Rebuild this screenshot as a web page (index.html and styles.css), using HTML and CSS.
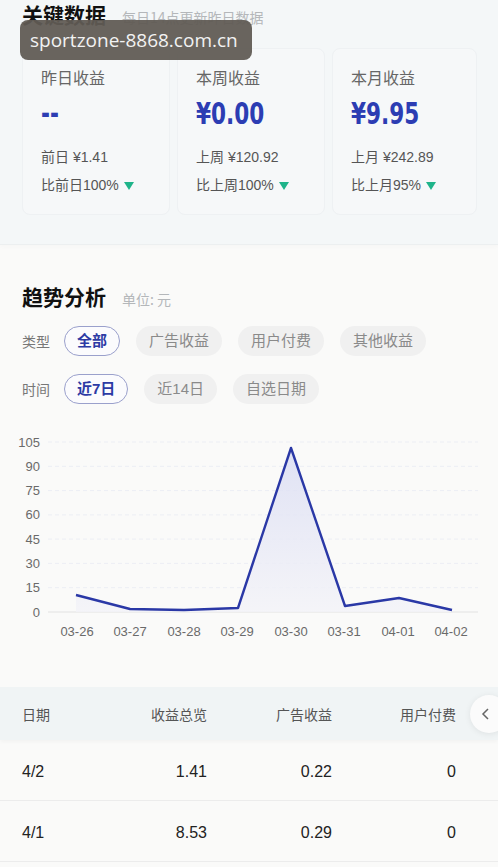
FILE: index.html
```html
<!DOCTYPE html>
<html lang="zh-CN">
<head>
  <meta charset="UTF-8" />
  <meta name="viewport" content="width=device-width, initial-scale=1.0"/>
  <title>数据概览</title>
  <link rel="stylesheet" href="styles.css">
</head>
<body>
  <div class="watermark">sportzone-8868.com.cn</div>

  <section class="key-data">
    <div class="section-head">
      <h3>关键数据</h3>
      <span class="hint">每日14点更新昨日数据</span>
    </div>

    <div class="cards">
      <div class="card">
        <div class="card-label">昨日收益</div>
        <div class="card-value"><span>--</span></div>
        <div class="card-sub">前日 ¥1.41</div>
        <div class="card-sub">比前日100% <span class="down"></span></div>
      </div>
      <div class="card">
        <div class="card-label">本周收益</div>
        <div class="card-value"><span>¥0.00</span></div>
        <div class="card-sub">上周 ¥120.92</div>
        <div class="card-sub">比上周100% <span class="down"></span></div>
      </div>
      <div class="card">
        <div class="card-label">本月收益</div>
        <div class="card-value"><span>¥9.95</span></div>
        <div class="card-sub">上月 ¥242.89</div>
        <div class="card-sub">比上月95% <span class="down"></span></div>
      </div>
    </div>
  </section>

  <section class="trend">
    <div class="section-head">
      <h3>趋势分析</h3>
      <span class="hint">单位: 元</span>
    </div>

    <div class="filter-row">
      <span class="filter-label">类型</span>
      <span class="chip active">全部</span>
      <span class="chip">广告收益</span>
      <span class="chip">用户付费</span>
      <span class="chip">其他收益</span>
    </div>
    <div class="filter-row">
      <span class="filter-label">时间</span>
      <span class="chip active">近7日</span>
      <span class="chip">近14日</span>
      <span class="chip">自选日期</span>
    </div>

    <svg class="chart" width="498" height="215" viewBox="0 0 498 215">
      <defs>
        <linearGradient id="area" x1="0" y1="0" x2="0" y2="1">
          <stop offset="0" stop-color="#d9dcf3" />
          <stop offset="1" stop-color="#f3f3f8" />
        </linearGradient>
      </defs>
      <g class="grid">
        <line x1="48" x2="478" y1="12" y2="12" />
        <line x1="48" x2="478" y1="36.3" y2="36.3" />
        <line x1="48" x2="478" y1="60.6" y2="60.6" />
        <line x1="48" x2="478" y1="84.9" y2="84.9" />
        <line x1="48" x2="478" y1="109.1" y2="109.1" />
        <line x1="48" x2="478" y1="133.4" y2="133.4" />
        <line x1="48" x2="478" y1="157.7" y2="157.7" />
      </g>
      <line class="baseline" x1="48" x2="478" y1="182" y2="182" />
      <g class="y-labels">
        <text x="40" y="16.5">105</text>
        <text x="40" y="40.8">90</text>
        <text x="40" y="65.1">75</text>
        <text x="40" y="89.4">60</text>
        <text x="40" y="113.6">45</text>
        <text x="40" y="137.9">30</text>
        <text x="40" y="162.2">15</text>
        <text x="40" y="186.5">0</text>
      </g>
      <polygon class="area" points="76,165 130,179 184,180 238,178 291,18 345,176 399,168 452,180 452,182 76,182" />
      <polyline class="line" points="76,165 130,179 184,180 238,178 291,18 345,176 399,168 452,180" />
      <g class="x-labels">
        <text x="77" y="206">03-26</text>
        <text x="130" y="206">03-27</text>
        <text x="184" y="206">03-28</text>
        <text x="237" y="206">03-29</text>
        <text x="291" y="206">03-30</text>
        <text x="344" y="206">03-31</text>
        <text x="398" y="206">04-01</text>
        <text x="451" y="206">04-02</text>
      </g>
    </svg>

    <div class="table">
      <div class="table-head">
        <span>日期</span>
        <span>收益总览</span>
        <span>广告收益</span>
        <span>用户付费</span>
      </div>
      <div class="table-row">
        <span>4/2</span>
        <span>1.41</span>
        <span>0.22</span>
        <span>0</span>
      </div>
      <div class="table-row">
        <span>4/1</span>
        <span>8.53</span>
        <span>0.29</span>
        <span>0</span>
      </div>
      <button class="collapse">
        <svg width="12" height="14" viewBox="0 0 12 14"><polyline points="8,2 3,7 8,12" /></svg>
      </button>
    </div>
  </section>
</body>
</html>
```

FILE: styles.css
```css
* {
  box-sizing: border-box;
}
body {
  margin: 0;
  font-family: "Liberation Sans", "Noto Sans CJK SC", sans-serif;
  background: #fafaf9;
  color: #222;
  position: relative;
}
.watermark {
  position: absolute;
  top: 20px;
  left: 20px;
  width: 232px;
  height: 40px;
  padding-left: 10px;
  border-radius: 8px;
  background: rgba(96, 90, 84, 0.94);
  color: #f2f2f2;
  font-family: "Open Sans", "Noto Sans", sans-serif;
  font-size: 19px;
  line-height: 40px;
  z-index: 2;
}
.section-head {
  display: flex;
  align-items: baseline;
  height: 28px;
}
.section-head h3 {
  margin: 0;
  width: 100px;
  font-family: "Noto Sans CJK SC", sans-serif;
  font-size: 21px;
  font-weight: 700;
  line-height: 28px;
  color: #111;
}
.hint {
  font-family: "Noto Sans CJK SC", sans-serif;
  font-size: 14px;
  color: #b4b7ba;
}
.key-data {
  background: #f4f7f8;
  height: 245px;
  padding: 0 18px 0 22px;
  border-bottom: 1px solid #eceff0;
  box-shadow: 0 2px 4px rgba(0, 0, 0, 0.02);
}
.cards {
  display: grid;
  grid-template-columns: 148px 148px 145px;
  gap: 7px;
  margin-top: 20px;
}
.card {
  height: 167px;
  padding: 17px 18px 0;
  background: #f6f8f9;
  border: 1px solid #eef1f3;
  border-radius: 8px;
}
.card-label {
  font-family: "Noto Sans CJK SC", sans-serif;
  font-size: 16px;
  line-height: 22px;
  color: #666;
}
.card-value {
  margin-top: 10px;
  height: 32px;
  font-family: "DejaVu Sans", "Liberation Sans", sans-serif;
  font-size: 30px;
  font-weight: 700;
  line-height: 32px;
  color: #2c3db3;
}
.card-value span {
  display: inline-block;
  transform: scaleX(0.72);
  transform-origin: left center;
}
.card-sub {
  margin-top: 8px;
  font-size: 14px;
  line-height: 20px;
  color: #555;
}
.card-value + .card-sub {
  margin-top: 17px;
}
.down {
  display: inline-block;
  width: 0;
  height: 0;
  margin-left: 1px;
  border-left: 5px solid transparent;
  border-right: 5px solid transparent;
  border-top: 8px solid #1fb48a;
  vertical-align: 0;
}
.trend {
  padding: 37px 0 0;
}
.trend .section-head,
.filter-row {
  padding-left: 22px;
}
.filter-row {
  display: flex;
  align-items: center;
  gap: 16px;
  margin-top: 16px;
  height: 30px;
}
.filter-row + .filter-row {
  margin-top: 18px;
}
.filter-label {
  margin-right: -2px;
  font-family: "Noto Sans CJK SC", sans-serif;
  font-size: 14px;
  color: #777;
}
.chip {
  height: 30px;
  padding: 0 12px;
  border: 1px solid transparent;
  border-radius: 15px;
  background: #f0f0f0;
  font-size: 15px;
  line-height: 28px;
  color: #8a8a8a;
}
.chip.active {
  background: #fbfbfd;
  border-color: #9aa0cc;
  color: #2c3aa4;
  font-weight: 600;
}
.chart {
  display: block;
  margin-top: 26px;
}
.chart .grid line {
  stroke: #eceef4;
  stroke-width: 1;
  stroke-dasharray: 4 3;
}
.chart .baseline {
  stroke: #e2e2e2;
  stroke-width: 1;
}
.chart text {
  font-family: "Liberation Sans", sans-serif;
  font-size: 13px;
  fill: #6a6a6a;
}
.y-labels text {
  text-anchor: end;
}
.x-labels text {
  text-anchor: middle;
}
.chart .area {
  fill: url(#area);
  opacity: 0.8;
}
.chart .line {
  fill: none;
  stroke: #2a38a6;
  stroke-width: 2.4;
  stroke-linejoin: round;
}
.table {
  position: relative;
  margin-top: 42px;
}
.table-head,
.table-row {
  display: grid;
  grid-template-columns: 85px 100px 125px 124px;
  padding-left: 22px;
  align-items: center;
}
.table-head span:not(:first-child),
.table-row span:not(:first-child) {
  text-align: right;
}
.table-head {
  height: 53px;
  background: #f0f4f5;
  font-family: "Noto Sans CJK SC", sans-serif;
  font-size: 14px;
  color: #555;
  box-shadow: 0 2px 4px rgba(0, 0, 0, 0.03);
}
.table-row {
  height: 61px;
  padding-top: 3px;
  border-bottom: 1px solid #ececec;
  font-size: 16px;
  color: #222;
}
.collapse {
  position: absolute;
  top: 8px;
  right: -10px;
  width: 38px;
  height: 38px;
  border: none;
  border-radius: 50%;
  background: #fbfbfb;
  box-shadow: 0 1px 6px rgba(0, 0, 0, 0.08);
  display: flex;
  align-items: center;
  padding: 0 0 0 10px;
}
.collapse polyline {
  fill: none;
  stroke: #666;
  stroke-width: 1.5;
}
```
